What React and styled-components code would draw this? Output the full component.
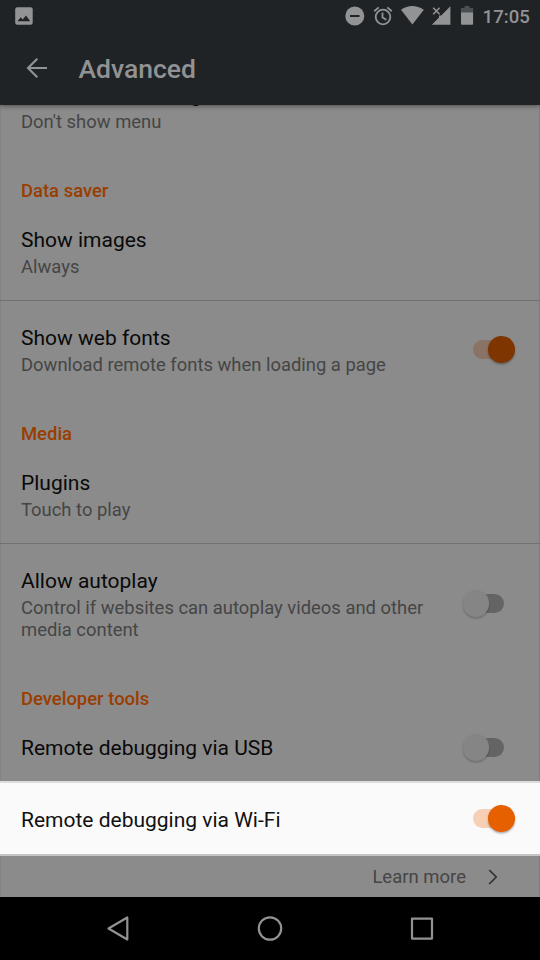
import React from "react";
import styled, { createGlobalStyle } from "styled-components";

const Global = createGlobalStyle`
  * { box-sizing: border-box; }
  body { margin: 0; background: #000; font-family: Roboto, sans-serif; }
`;
const Screen = styled.main`
  width: 540px; height: 960px; overflow: hidden;
  display: flex; flex-direction: column; background: #8b8b8b;
`;
const Header = styled.header`
  flex: 0 0 105px; z-index: 1; background: #1f2326; color: #919293;
  box-shadow: 0 1px 5px rgba(0, 0, 0, 0.45);
`;
const StatusBar = styled.div`
  height: 32px; display: flex; justify-content: space-between;
`;
const Toolbar = styled.div`
  height: 73px; display: flex; align-items: center;
`;
const BackIcon = styled.svg`
  width: 24px; height: 24px; margin: -1px 0 0 25px; flex: none;
`;
const PageTitle = styled.h1`
  margin: 1px 0 0 29.5px; font-size: 26.5px; line-height: 32px; font-weight: 500;
`;
const Settings = styled.div`
  flex: 0 0 792px; display: flex; flex-direction: column;
  box-shadow: inset 1px 0 #838383, inset -1px 0 #7d7d7d;
`;
const Category = styled.h2`
  margin: 0; height: 50px; padding: 14px 21px 0; flex: none;
  font-size: 18.45px; line-height: 24px; font-weight: 500; color: #9a3d00;
`;
const Row = styled.section`
  flex: 0 0 ${(p) => p.$height}px; display: flex; justify-content: space-between;
  padding: ${(p) => p.$top}px 25px 0 21px;
  border-bottom: ${(p) => (p.$divider ? "1px solid #717171" : "0")};
`;
const HighlightRow = styled(Row)`
  background: #fafafa; border-top: 2px solid #dcdcdc; border-bottom: 2px solid #c4c4c4;
`;
const Title = styled.div`
  font-size: 21px; line-height: 26px; color: ${(p) => (p.$bright ? "#111" : "#090909")};
  white-space: nowrap;
`;
const ScrolledTitle = styled(Title)`
  margin-top: -23px; font-size: 20.85px;
`;
const Summary = styled.div`
  font-size: 18.42px; line-height: 21.5px; margin-top: 3px; color: #454545;
  white-space: pre-line;
`;
const SwitchBox = styled.div`
  flex: none; width: 42px; height: 27px; display: flex; align-items: center;
  justify-content: ${(p) => (p.$on ? "flex-start" : "flex-end")};
  margin: ${(p) => p.$top}px ${(p) => (p.$on ? 0 : 11)}px 0 0;
`;
const Track = styled.div`
  display: flex; align-items: center; width: 31px; height: 19px; border-radius: 10px;
  justify-content: ${(p) => (p.$on ? "flex-end" : "flex-start")};
  background: ${(p) => (!p.$on ? "#646464" : p.$bright ? "#f6cfb4" : "#8a7364")};
`;
const Thumb = styled.div`
  flex: none; width: 26.5px; height: 26.5px; border-radius: 50%;
  margin: ${(p) => (p.$on ? "0 -10.5px 0 0" : "0 0 0 -10.5px")};
  background: ${(p) => (!p.$on ? "#858585" : p.$bright ? "#e66000" : "#7f3500")};
  box-shadow: 0 1.5px 2px ${(p) => (p.$on ? "rgba(0,0,0,.3)" : "rgba(0,0,0,.22)")};
`;
const LearnMore = styled.div`
  flex: 0 0 41px; display: flex; align-items: center; justify-content: flex-end;
  gap: 22px; padding: 0 42px 0 0; font-size: 18.5px; color: #454545;
`;
const Chevron = styled.svg`
  width: 10px; height: 16px;
`;
const NavBar = styled.nav`
  flex: 0 0 63px; z-index: 1; background: #000;
`;
const Glyphs = styled.svg`
  display: block;
`;

function Switch({ on, bright, top }) {
  return (
    <SwitchBox $on={on} $top={top} role="switch" aria-checked={!!on}>
      <Track $on={on} $bright={bright}>
        <Thumb $on={on} $bright={bright} />
      </Track>
    </SwitchBox>
  );
}

function StatusIcons() {
  return (
    <Glyphs width="200" height="32" viewBox="340 0 200 32" fill="#929394">
      <circle cx="354.8" cy="16" r="9.5" />
      <path d="M350 16h9.5" stroke="#1f2326" strokeWidth="2" />
      <g fill="none" stroke="#929394" strokeWidth="1.8">
        <circle cx="383" cy="17" r="7.3" />
        <path d="M374.2 11.2l4.5-3.8M391.8 11.2l-4.5-3.8M382.5 12.5v5l3.8 2.3" />
      </g>
      <path d="M401 9.8Q412.2 2.4 423.8 9.8L412.4 24.5Z" />
      <path d="M450.4 6.2V24.7H431.8L439 17.6V15.4H441.2Z" />
      <path d="M433.2 7.8l6.4 6.4m0-6.4l-6.4 6.4" stroke="#929394" strokeWidth="1.6" />
      <path d="M464.5 6h5v2h3.6v5h-12.2V8h3.6Z" fill="#4c4f51" />
      <path d="M461 12.5h12.1v11.2q0 1-1 1H462q-1 0-1-1Z" />
      <text x="482.6" y="22.8" fontFamily="Roboto, sans-serif" fontSize="18.6" fontWeight="500">17:05</text>
    </Glyphs>
  );
}

export default function App() {
  return (
    <Screen>
      <Global />
      <Header>
        <StatusBar>
          <Glyphs width="50" height="32" viewBox="0 0 50 32">
            <rect x="15.2" y="7.2" width="17.5" height="17.5" rx="2" fill="#929394" />
            <path d="M17.5 21.2l3.2-4 2 2.2 3.3-4 4.2 5.8Z" fill="#1f2326" />
          </Glyphs>
          <StatusIcons />
        </StatusBar>
        <Toolbar>
          <BackIcon viewBox="0 0 24 24" fill="none" stroke="#929394" strokeWidth="2.1">
            <path d="M22 12H3M12.3 2.7L3 12l9.3 9.3" />
          </BackIcon>
          <PageTitle>Advanced</PageTitle>
        </Toolbar>
      </Header>
      <Settings>
        <Row $height={60} $top={0}>
          <div>
            <ScrolledTitle>Character encoding</ScrolledTitle>
            <Summary>Don't show menu</Summary>
          </div>
        </Row>
        <Category>Data saver</Category>
        <Row $height={86} $top={12} $divider>
          <div>
            <Title>Show images</Title>
            <Summary>Always</Summary>
          </div>
        </Row>
        <Row $height={107} $top={24}>
          <div>
            <Title>Show web fonts</Title>
            <Summary>Download remote fonts when loading a page</Summary>
          </div>
          <Switch on top={11} />
        </Row>
        <Category>Media</Category>
        <Row $height={86} $top={12} $divider>
          <div>
            <Title>Plugins</Title>
            <Summary>Touch to play</Summary>
          </div>
        </Row>
        <Row $height={129} $top={24}>
          <div>
            <Title>Allow autoplay</Title>
            <Summary>{"Control if websites can autoplay videos and other\nmedia content"}</Summary>
          </div>
          <Switch top={22} />
        </Row>
        <Category>Developer tools</Category>
        <Row $height={58} $top={12}>
          <Title>Remote debugging via USB</Title>
          <Switch top={-1} />
        </Row>
        <HighlightRow $height={75} $top={24}>
          <Title $bright>Remote debugging via Wi-Fi</Title>
          <Switch on bright top={-2} />
        </HighlightRow>
        <LearnMore>
          Learn more
          <Chevron viewBox="0 0 10 16" fill="none" stroke="#303030" strokeWidth="1.7">
            <path d="M1.2 1l7 7-7 7" />
          </Chevron>
        </LearnMore>
      </Settings>
      <NavBar>
        <Glyphs width="540" height="63" viewBox="0 897 540 63" fill="none" stroke="#929292" strokeWidth="2.2" strokeLinejoin="round">
          <path d="M127.3 917.5v22L108.5 928.5Z" />
          <circle cx="270" cy="928.5" r="11.2" />
          <rect x="412" y="918.6" width="20" height="20" />
        </Glyphs>
      </NavBar>
    </Screen>
  );
}
